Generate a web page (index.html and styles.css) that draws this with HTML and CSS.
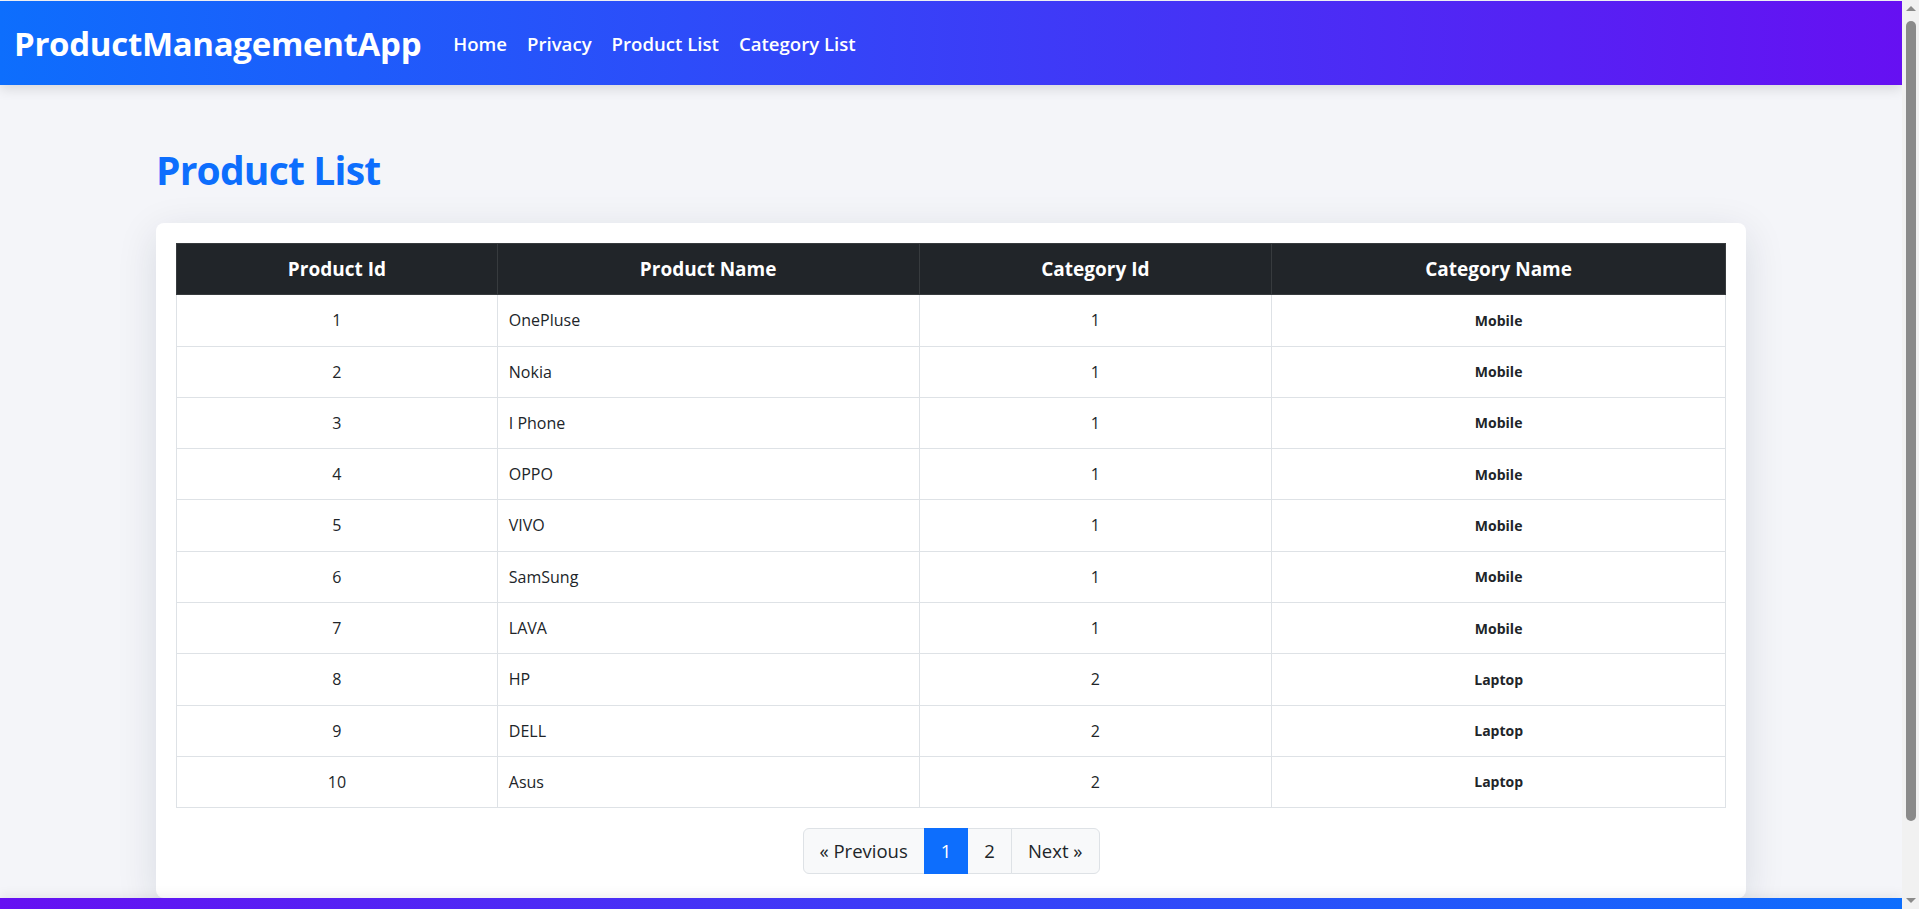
FILE: index.html
```html
<!DOCTYPE html>
<html lang="en">
<head>
<meta charset="utf-8">
<title>Product List - ProductManagementApp</title>
<link rel="stylesheet" href="styles.css">
</head>
<body>
<header class="topbar">
  <a class="brand" href="#">ProductManagementApp</a>
  <nav class="nav">
    <a class="nav-link" href="#">Home</a>
    <a class="nav-link" href="#">Privacy</a>
    <a class="nav-link" href="#">Product List</a>
    <a class="nav-link" href="#">Category List</a>
  </nav>
</header>
<main class="container">
  <h1 class="page-title">Product List</h1>
  <section class="card">
    <table class="table">
      <colgroup>
        <col class="c1"><col class="c2"><col class="c3"><col class="c4">
      </colgroup>
      <thead>
        <tr><th>Product Id</th><th>Product Name</th><th>Category Id</th><th>Category Name</th></tr>
      </thead>
      <tbody>
        <tr><td class="center">1</td><td>OnePluse</td><td class="center">1</td><td class="center"><strong class="cat">Mobile</strong></td></tr>
        <tr><td class="center">2</td><td>Nokia</td><td class="center">1</td><td class="center"><strong class="cat">Mobile</strong></td></tr>
        <tr><td class="center">3</td><td>I Phone</td><td class="center">1</td><td class="center"><strong class="cat">Mobile</strong></td></tr>
        <tr><td class="center">4</td><td>OPPO</td><td class="center">1</td><td class="center"><strong class="cat">Mobile</strong></td></tr>
        <tr><td class="center">5</td><td>VIVO</td><td class="center">1</td><td class="center"><strong class="cat">Mobile</strong></td></tr>
        <tr><td class="center">6</td><td>SamSung</td><td class="center">1</td><td class="center"><strong class="cat">Mobile</strong></td></tr>
        <tr><td class="center">7</td><td>LAVA</td><td class="center">1</td><td class="center"><strong class="cat">Mobile</strong></td></tr>
        <tr><td class="center">8</td><td>HP</td><td class="center">2</td><td class="center"><strong class="cat">Laptop</strong></td></tr>
        <tr><td class="center">9</td><td>DELL</td><td class="center">2</td><td class="center"><strong class="cat">Laptop</strong></td></tr>
        <tr><td class="center">10</td><td>Asus</td><td class="center">2</td><td class="center"><strong class="cat">Laptop</strong></td></tr>
      </tbody>
    </table>
    <nav class="pager">
      <ul class="pagination">
        <li><a class="page-link" href="#">&laquo; Previous</a></li>
        <li><a class="page-link active" href="#">1</a></li>
        <li><a class="page-link" href="#">2</a></li>
        <li><a class="page-link" href="#">Next &raquo;</a></li>
      </ul>
    </nav>
  </section>
</main>
<footer class="footer"></footer>
<aside class="scrollbar" aria-hidden="true">
  <span class="sb-arrow sb-up"></span>
  <span class="sb-thumb"></span>
  <span class="sb-arrow sb-down"></span>
</aside>
</body>
</html>
```
FILE: styles.css
```css
* { box-sizing: border-box; }

html { font-size: 16px; }

body {
  margin: 0;
  padding: 1px 17px 0 0;
  background: #f4f5f9;
  color: #212529;
  font-family: "Segoe UI", "Open Sans", "Noto Sans", Arial, sans-serif;
  font-size: 16px;
  line-height: 1.5;
}

a { text-decoration: none; color: inherit; }

.topbar {
  display: flex;
  align-items: center;
  height: 84px;
  padding: 2px 14px 0;
  background: linear-gradient(90deg, #0d6efd 0%, #6610f2 100%);
  box-shadow: 0 4px 12px rgba(0, 0, 0, 0.12);
  color: #fff;
  position: relative;
  z-index: 1;
}

.brand {
  font-size: 33px;
  font-weight: 700;
  letter-spacing: -0.3px;
  margin-right: 22px;
  line-height: 1;
  padding-bottom: 2px;
}

.nav {
  display: flex;
  align-items: center;
}

.nav-link {
  font-size: 18.6px;
  font-weight: 600;
  padding: 0 10px;
  line-height: 1;
}

.container {
  width: 1590px;
  margin: 0 auto;
  padding-top: 61px;
}

.page-title {
  margin: 0 0 29px;
  font-size: 39px;
  line-height: 48px;
  font-weight: 700;
  color: #0d6efd;
  letter-spacing: -0.8px;
}

.card {
  background: #fff;
  border-radius: 8px;
  padding: 20px 20px 24px;
  box-shadow: 0 10px 40px rgba(20, 30, 60, 0.12);
}

.table {
  width: 100%;
  border-collapse: collapse;
  margin-bottom: 20px;
}

.c1 { width: 321px; }
.c2 { width: 422px; }
.c3 { width: 353px; }
.c4 { width: 454px; }

.table th,
.table td {
  border: 1px solid #dee2e6;
  padding: 12.5px 11px;
  line-height: 24.3px;
  vertical-align: middle;
}

.table th {
  background: #212529;
  color: #fff;
  border-color: #373b3e;
  font-size: 19px;
  font-weight: 700;
  text-align: center;
  padding-top: 13px;
  padding-bottom: 13px;
}

.center { text-align: center; }

.cat {
  font-size: 14px;
  font-weight: 700;
}

.pager {
  display: flex;
  justify-content: center;
}

.pagination {
  display: flex;
  list-style: none;
  margin: 0;
  padding: 0;
}

.page-link {
  display: block;
  padding: 8px 16px;
  font-size: 18.5px;
  line-height: 28px;
  background: #f8f9fa;
  border: 1px solid #dee2e6;
  margin-left: -1px;
  color: #212529;
}

.pagination li:first-child .page-link {
  margin-left: 0;
  border-radius: 6px 0 0 6px;
}

.pagination li:last-child .page-link {
  border-radius: 0 6px 6px 0;
}

.page-link.active {
  background: #0d6efd;
  border-color: #0d6efd;
  color: #fff;
  position: relative;
  z-index: 1;
}

.footer {
  height: 56px;
  background: linear-gradient(90deg, #6610f2 0%, #0d6efd 100%);
  box-shadow: 0 -4px 10px rgba(0, 0, 0, 0.06);
  position: relative;
}

/* visual replica of the browser's vertical scrollbar */
.scrollbar {
  position: fixed;
  top: 0;
  right: 0;
  width: 17px;
  height: 100vh;
  background: #f1f1f1;
  display: flex;
  flex-direction: column;
  align-items: center;
  z-index: 5;
}

.sb-arrow {
  width: 0;
  height: 0;
  border-left: 5px solid transparent;
  border-right: 5px solid transparent;
  flex: none;
}

.sb-up {
  margin-top: 6px;
  border-bottom: 5px solid #8a8a8a;
}

.sb-down {
  margin-top: auto;
  margin-bottom: 6px;
  border-top: 5px solid #8a8a8a;
}

.sb-thumb {
  width: 10px;
  height: 800px;
  margin-top: 10px;
  margin-left: 1px;
  border-radius: 5px;
  background: #8a8a8a;
}
```
